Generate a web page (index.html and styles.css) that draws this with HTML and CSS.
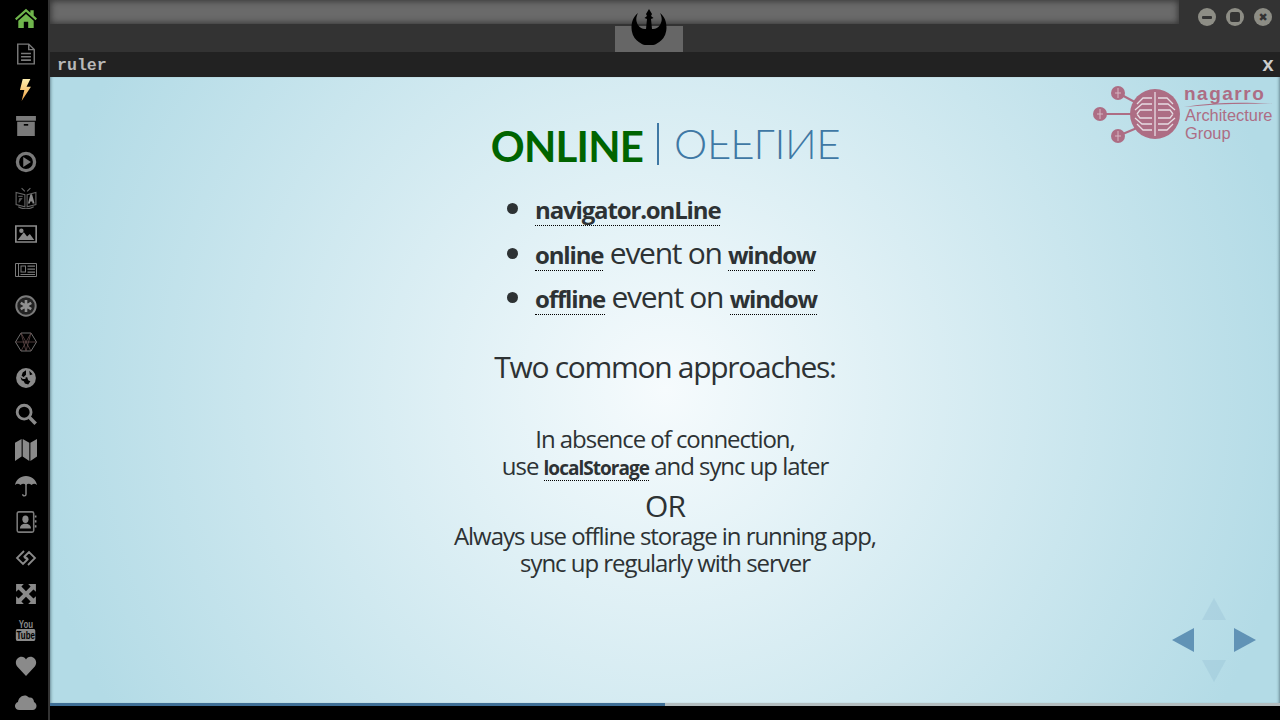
FILE: index.html
```html
<!DOCTYPE html>
<html lang="en">
<head>
<meta charset="utf-8">
<title>ruler</title>
<link rel="stylesheet" href="styles.css">
</head>
<body>
<div class="app">
<nav class="side">
<svg class="ic" viewBox="0 0 20 20"><path fill="#6fb54c" d="M10 1.500 0 10.500 1.300 12 10 4.300 18.700 12 20 10.500 17 7.800V3h-3v2.200zM3 12.500 10 6.300 17 12.500V19H12V13.500H8V19H3z"/></svg>
<svg class="ic" viewBox="0 0 20 20"><path fill="none" stroke="#7a7a7a" stroke-width="1.300" d="M2.500 1h10l5 5v13h-15zM12.500 1v5h5"/><path stroke="#7a7a7a" stroke-width="1.500" d="M5.500 9.500h9M5.500 12.500h9M5.500 15.500h9"/></svg>
<svg class="ic" viewBox="0 0 20 20"><defs><linearGradient id="bolt" x1="0" y1="0" x2="0" y2="1"><stop offset="0" stop-color="#fff0b0"/><stop offset="1" stop-color="#f0a040"/></linearGradient></defs><path fill="url(#bolt)" d="M7 0h7L10.500 7H14.500L6 20 8.500 10H4.500z"/></svg>
<svg class="ic" viewBox="0 0 20 20"><path fill="#7a7a7a" d="M1 1h18v4.200H1zM2 6.200h16V19H2z"/><path fill="#000" d="M8 8.200h4v1.500H8z"/></svg>
<svg class="ic" viewBox="0 0 20 20"><circle cx="10" cy="10" r="7.800" fill="none" stroke="#7a7a7a" stroke-width="3"/><path fill="#7a7a7a" d="M7.500 5.500l7 4.500-7 4.500z"/></svg>
<svg class="ic" viewBox="0 0 20 20"><path fill="none" stroke="#666" stroke-width="1" d="M1 5l8 2v11l-8-2zM11 7l8-2v11l-8 2zM3 18c4 2.500 10 2.500 14 0M6 1 9 4M14 1l-3 3"/><path fill="#8a8a8a" d="M11.800 15 14 6.500h1.500L17.800 15h-1.800l-.4-1.800h-1.700l-.4 1.800z"/><path fill="#555" d="M3 8h4v1.200H3zM4 10h3l-3 4h-1z"/></svg>
<svg class="ic" viewBox="0 0 20 20"><path fill="#8a8a8a" fill-rule="evenodd" d="M0 2h20v16H0zM1.500 3.500v13h17v-13z"/><path fill="#8a8a8a" d="M2.500 15.500 8 8.500l3 3.800 2.500-2.200 4 5.400z"/><circle cx="5.800" cy="7" r="2" fill="#8a8a8a"/></svg>
<svg class="ic" viewBox="0 0 22 20"><path fill="none" stroke="#7a7a7a" d="M.5 3.500v13h21v-13zM3.500 3.500v13"/><path fill="#7a7a7a" fill-rule="evenodd" d="M5.500 5.500h5.500v7H5.500zM6.500 6.500v5h3.500v-5z"/><path fill="#7a7a7a" d="M12.500 5.500H20v1.300h-7.500zM12.500 8.500H20v1.300h-7.500zM12.500 11.500H20v1.300h-7.500zM5.500 14h14.500v1H5.500z"/></svg>
<svg class="ic" viewBox="0 0 20 20"><circle cx="10" cy="10" r="8.800" fill="#222" stroke="#7a7a7a" stroke-width="1.800"/><path stroke="#8f8f8f" stroke-width="2.400" d="M10 4.500v11M5.200 7.200l9.600 5.600M14.800 7.200l-9.600 5.600"/><circle cx="10" cy="10" r="2.500" fill="#8f8f8f"/></svg>
<svg class="ic" viewBox="0 0 22 20"><path fill="none" stroke="#7a7a7a" stroke-width=".9" d="M.5 10 6 1h10l5.500 9L16 19H6z"/><path fill="none" stroke="#6a5050" stroke-width=".7" d="M6 1l5 18M16 1l-5 18M.5 10h21M6 19 16 1M16 19 6 1"/></svg>
<svg class="ic" viewBox="0 0 20 20"><circle cx="10" cy="10" r="9" fill="#8a8a8a"/><path fill="#000" d="M10 3 7 5 6 8 9 10 11 9 12 12 14 13 12 16 9 15 8 13 6 12 5 9 7 11 10 11 8 9 10 7zM13 3.500l3 3-2.500 1z"/></svg>
<svg class="ic" viewBox="0 0 20 20"><circle cx="8.300" cy="8.300" r="6.300" fill="none" stroke="#8a8a8a" stroke-width="2.600"/><path stroke="#8a8a8a" stroke-width="3.200" d="M13 13l5.800 5.800"/></svg>
<svg class="ic" viewBox="0 0 20 20"><path fill="#8a8a8a" d="M0 3.500 6 0v16L0 20zM7 0l6 3.500V20l-6-4zM14 3.500 20 0v16l-6 4z"/></svg>
<svg class="ic" viewBox="0 0 20 20"><path fill="#8a8a8a" d="M10 1C5 1 1 4.500 0 9c2-1.500 3-1.500 5 0 2-1.500 3-1.500 5 0 2-1.500 3-1.500 5 0 2-1.500 3-1.500 5 0-1-4.500-5-8-10-8z"/><path fill="none" stroke="#8a8a8a" stroke-width="1.300" d="M10 8v9.500c0 2-3 2-3 0"/></svg>
<svg class="ic" viewBox="0 0 20 20"><rect x="2" y=".8" width="15" height="18.400" rx="1.500" fill="none" stroke="#7a7a7a" stroke-width="1.400"/><path fill="#8a8a8a" d="M18 4h1.500v2H18zM18 8.500h1.500v2H18zM18 13h1.500v2H18z"/><ellipse cx="9.500" cy="7.500" rx="2.800" ry="3.300" fill="#8a8a8a"/><path fill="#8a8a8a" d="M4.500 16c0-3 2-4.500 5-4.500s5 1.500 5 4.500z"/></svg>
<svg class="ic" viewBox="0 0 22 20"><path fill="none" stroke="#8a8a8a" stroke-width="1.800" d="M9 3 2 10l6 6 4.500-4.500-3.500-2.500M13 17l7-7-6-6-4.500 4.500 3.500 2.500"/></svg>
<svg class="ic" viewBox="0 0 20 20"><path fill="#8a8a8a" d="M1 1h7L5.800 3.200 10 7.400 14.200 3.200 12 1h7v7l-2.200-2.200L12.600 10l4.200 4.200L19 12v7h-7l2.200-2.200L10 12.600l-4.200 4.200L8 19H1v-7l2.200 2.200L7.400 10 3.200 5.800 1 8z"/></svg>
<div class="yt"><span class="yt-you">You</span><span class="yt-tube">Tube</span></div>
<svg class="ic" viewBox="0 0 20 20"><path fill="#8a8a8a" d="M10 19 2 10.500C-1 6 2 1.500 6 1.500c2 0 3 1 4 2.500 1-1.500 2-2.500 4-2.500 4 0 7 4.500 4 9z"/></svg>
<svg class="ic" viewBox="0 0 22 20"><path fill="#8a8a8a" d="M4.500 18c-5.500 0-6-6.500-1.500-8C3.500 4.500 10 1 14 5.500c3-.5 5 1.500 5 4.500 4 2 3 8-1.500 8z"/></svg>
</nav>
<div class="main">
<header class="top">
<div class="search"></div>
<div class="tab"></div>
<svg class="rebel" viewBox="0 0 36 36"><path fill="#000" d="M7 4C2 8 .5 13 .5 19A17.500 17.500 0 0 0 35.500 19C35.500 13 34 8 29 4 31 8 31.500 12 29 16 27 19 24 20.500 21 20L20 10 22.500 9 20 7 21 5 18 0 15 5 16 7 13.500 9 16 10 15 20C12 20.500 9 19 7 16 4.500 12 5 8 7 4Z"/></svg>
<div class="winbtns">
<span class="wb"><i class="wb-min"></i></span>
<span class="wb"><i class="wb-max"></i></span>
<span class="wb"><b class="wb-x">✖</b></span>
</div>
</header>
<div class="ruler"><span>ruler</span><span class="close">x</span></div>
<section class="slide">
<svg class="logo" viewBox="0 0 182 62">
<g fill="none" stroke="#ad6d84" stroke-width="2"><path d="M26 10 52 24M8 31H50M26 53 52 42"/></g>
<g fill="#ad6d84"><circle cx="26" cy="10" r="7"/><circle cx="8" cy="31" r="7"/><circle cx="26" cy="53" r="7"/><circle cx="63" cy="31" r="25"/></g>
<g fill="none" stroke="#d6b5c2" stroke-width="1"><path d="M26 5v10M23 10h6M8 26v10M5 31h6M26 48v10M23 53h6"/></g>
<g fill="none" stroke="#e6dbe2" stroke-width="1.300"><path d="M63 9V53M60 15H51l-6 6M66 15h9l6 6M60 21H50l-7 6M66 21h10l7 6M60 27H48l-3 4M66 27h12l3 4M60 35H48l-3-4M66 35h12l3-4M60 41H50l-7-6M66 41h10l7-6M60 47H51l-6-6M66 47h9l6-6"/></g>
<text x="92" y="17" class="lg-n">nagarro</text>
<path d="M92 24c30-5 60-5 88-3-30-1-60 0-88 3z" fill="#ad6d84"/>
<text x="93" y="38" class="lg-t">Architecture</text>
<text x="93" y="56" class="lg-t">Group</text>
</svg>
<h1 class="title"><span class="on">ONLINE</span><span class="sep"></span><span class="off">OFFLINE</span></h1>
<ul class="list">
<li><code class="k">navigator.onLine</code></li>
<li><code class="k">online</code> event on <code class="k">window</code></li>
<li><code class="k">offline</code> event on <code class="k">window</code></li>
</ul>
<h2 class="sub">Two common approaches:</h2>
<p class="p1">In absence of connection,<br>use <code class="k2">localStorage</code> and sync up later</p>
<div class="or">OR</div>
<p class="p2">Always use offline storage in running app,<br>sync up regularly with server</p>
<div class="arrows">
<i class="ar up"></i><i class="ar left"></i><i class="ar right"></i><i class="ar down"></i>
</div>
</section>
<div class="progress"><div class="bar"></div></div>
</div>
</div>
</body>
</html>
```
FILE: styles.css
```css
*{box-sizing:border-box}
html,body{margin:0;height:100%;background:#000;overflow:hidden}
.app{display:flex;height:720px;width:1280px}
.side{width:50px;flex:none;background:#000;border-right:2px solid #333;display:flex;flex-direction:column;align-items:center;padding:7px 0 0 3px}
.ic{width:22px;height:22px;margin-bottom:14px;flex:none;display:block}
.yt{height:22px;margin-bottom:14px;display:flex;flex-direction:column;align-items:center;font:700 11px/10px "Liberation Sans",sans-serif;color:#8a8a8a}
.yt-you{transform:scaleX(.72)}
.yt-tube{background:#8a8a8a;color:#000;border-radius:2px;padding:1px 1px 0;line-height:11px;transform:scaleX(.72)}
.main{flex:1;display:flex;flex-direction:column;min-width:0}
.top{height:52px;background:#333;position:relative;flex:none}
.search{position:absolute;left:0;top:0;width:1129px;height:24px;background:#6a6a6a;box-shadow:inset 0 0 6px 1px #333}
.tab{position:absolute;left:565px;top:26px;width:68px;height:26px;background:#666}
.rebel{position:absolute;left:581px;top:9px;width:36px;height:36px}
.winbtns{position:absolute;right:8px;top:8px;display:flex;gap:10px}
.wb{width:18px;height:18px;border-radius:50%;background:#8d8d85;display:flex;align-items:center;justify-content:center}
.wb-min{width:10px;height:3px;background:#333;border-radius:1px}
.wb-max{width:10px;height:10px;background:#333;border-radius:2px}
.wb-x{font:700 11px/1 "DejaVu Sans",sans-serif;color:#333}
.ruler{height:25px;background:#222;flex:none;display:flex;justify-content:space-between;align-items:center;padding:3px 6px 0 7px;font:700 16.600px/1 "Liberation Mono",monospace;color:#b8b8b8}
.close{color:#ccc;font-size:20px;line-height:16px}
.slide{flex:none;height:626px;position:relative;background:radial-gradient(circle 640px at 50% 50%,#f6fbfd 0,#b3dbe6 100%);box-shadow:inset 3px 0 3px -2px #6a8a95,inset -3px 0 3px -2px #6a8a95;color:#2d3234;font-family:"Open Sans",sans-serif;display:flex;flex-direction:column;align-items:center;padding-top:46px}
.logo{position:absolute;right:6px;top:6px;width:182px;height:62px}
.lg-n{font:700 19px "Liberation Sans",sans-serif;fill:#ad6d84;letter-spacing:1.500px}
.lg-t{font:400 16.400px "Liberation Sans",sans-serif;fill:#ad6d84}
.title{margin:0 0 0 1px;height:42px;display:flex;align-items:center;font:400 42px/42px Lato,sans-serif}
.on{color:#006400;font-weight:700;letter-spacing:-.8px;padding-top:4px}
.sep{width:2px;height:42px;background:#3f78a4;margin:0 15px 0 14px}
.off{color:#3f78a4;font-weight:300;letter-spacing:-.4px;transform:scaleY(-1);padding-bottom:4px}
.list{margin:21px 0 0 -20px;padding:0 0 0 42px;font-size:30px;line-height:44.500px;letter-spacing:-1.300px;list-style:disc}
.k{display:inline-block;font:700 24px/30px "Open Sans",sans-serif;letter-spacing:-1.150px;border-bottom:1px dotted #000}
.sub{margin:24px 0 0;font-weight:400;font-size:30px;line-height:45px;letter-spacing:-1.300px}
.p1,.p2{margin:0;text-align:center;font-size:24px;line-height:27px;letter-spacing:-1.050px}
.p1{margin-top:36px}
.k2{display:inline-block;font:700 19px/23px "Open Sans",sans-serif;letter-spacing:-.970px;border-bottom:1px dotted #000}
.or{font-size:30px;line-height:38px;letter-spacing:-1px;margin-top:6px}
.p2{margin-top:-3px}
.arrows{position:absolute;right:24px;bottom:21px;width:84px;height:84px}
.ar{position:absolute;width:0;height:0;border-style:solid;border-color:transparent}
.left{left:0;top:30px;border-width:12px 22px 12px 0;border-right-color:#6193b6}
.right{right:0;top:30px;border-width:12px 0 12px 22px;border-left-color:#6193b6}
.up{left:30px;top:0;border-width:0 12px 22px;border-bottom-color:rgba(97,147,182,.14)}
.down{left:30px;bottom:0;border-width:22px 12px 0;border-top-color:rgba(97,147,182,.14)}
.progress{height:3px;background:#b3bdbf;flex:none}
.bar{width:50%;height:3px;background:#3f6f96}
```
